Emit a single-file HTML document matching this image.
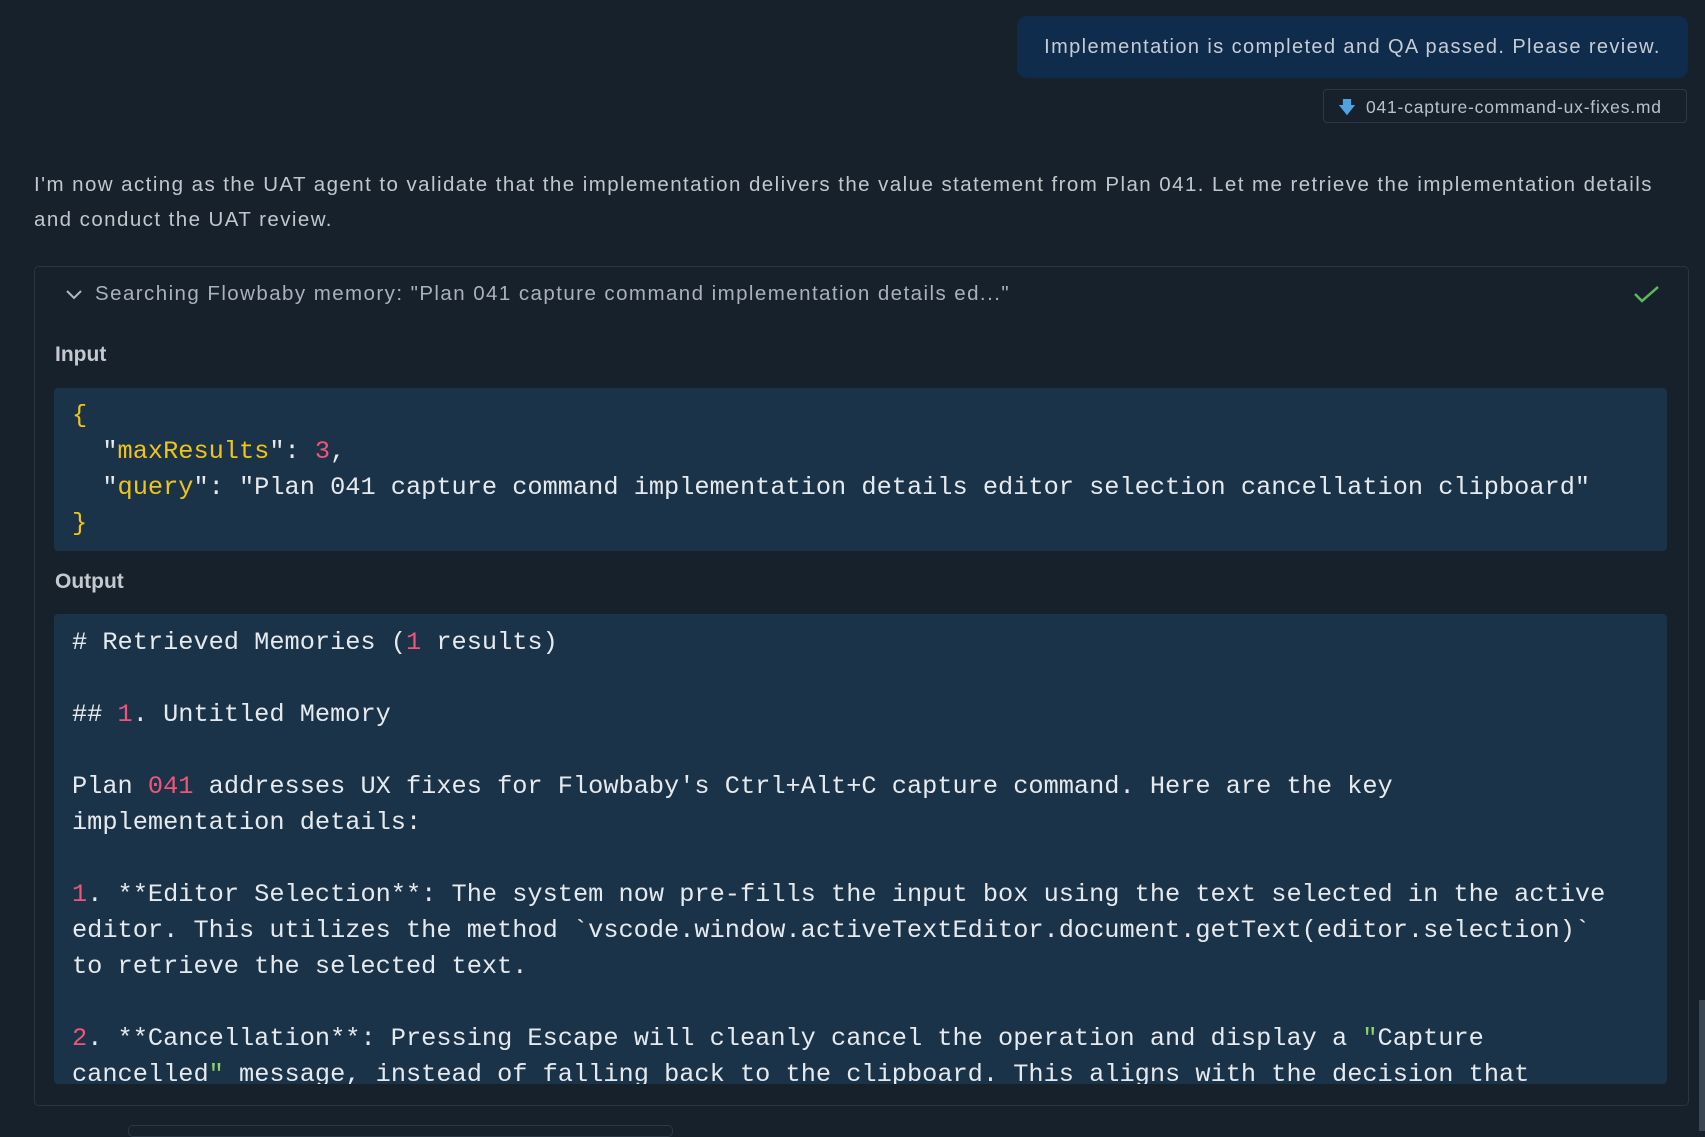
<!DOCTYPE html>
<html><head><meta charset="utf-8"><style>
body{margin:0;width:1705px;height:1131px;background:#17212b;overflow:hidden;position:relative;font-family:"Liberation Sans",sans-serif;color:#c3c9cf}
.abs{position:absolute}
.ub{letter-spacing:0.07em}
.bubble{left:1017px;top:16px;width:671px;height:62px;background:#0f2c4d;border-radius:10px;color:#c6ccd3;font-size:20px;line-height:62px;text-align:center;white-space:nowrap}
.chip{left:1323px;top:89px;width:364px;height:34px;border:1px solid #2c3944;border-radius:4px;font-size:17.5px;line-height:34px;color:#b8c0c8;box-sizing:border-box;white-space:nowrap}
.para{left:34px;top:167px;width:1660px;font-size:20.5px;line-height:35px;color:#c0c6cc;white-space:nowrap}
.box{left:34px;top:266px;width:1655px;height:840px;border:1px solid #2a3540;border-radius:5px;box-sizing:border-box}
.hdr{left:95px;top:282px;font-size:20.5px;color:#a9b1b9;white-space:nowrap}
.lbl{font-size:21px;color:#c3c9cf;font-weight:bold;left:55px}
.code{left:54px;width:1613px;background:#1a3349;border-radius:4px;font-family:"Liberation Mono",monospace;font-size:25.3px;line-height:36px;white-space:pre;color:#e6eaee;box-sizing:border-box;padding-left:18px;overflow:hidden}
.y{color:#f0c419}.n{color:#f0547a}.g{color:#8fd16a}
</style></head><body>
<div class="abs bubble ub">Implementation is completed and QA passed. Please review.</div>
<div class="abs chip ub" style="letter-spacing:0.045em"><span style="color:#4fa3e0;margin:0 10px 0 14px;letter-spacing:0">&#129095;</span>041-capture-command-ux-fixes.md</div>
<div class="abs para ub">I'm now acting as the UAT agent to validate that the implementation delivers the value statement from Plan 041. Let me retrieve the implementation details<br>and conduct the UAT review.</div>
<div class="abs box"></div>
<svg class="abs" style="left:65px;top:287px" width="20" height="16"><path d="M2 4 L9 11 L16 4" fill="none" stroke="#b0b8c0" stroke-width="2"/></svg>
<div class="abs hdr ub">Searching Flowbaby memory: "Plan 041 capture command implementation details ed..."</div>
<svg class="abs" style="left:1633px;top:284px" width="28" height="22"><path d="M2 10 L9 17 L25 3" fill="none" stroke="#5cb85c" stroke-width="2.5"/></svg>
<div class="abs lbl" style="top:343px">Input</div>
<div class="abs code" style="top:388px;height:163px;padding-top:10px"><span class="y">{</span>
  "<span class="y">maxResults</span>": <span class="n">3</span>,
  "<span class="y">query</span>": "Plan 041 capture command implementation details editor selection cancellation clipboard"
<span class="y">}</span></div>
<div class="abs lbl" style="top:570px">Output</div>
<div class="abs code" style="top:614px;height:470px;padding-top:11px"># Retrieved Memories (<span class="n">1</span> results)

## <span class="n">1</span>. Untitled Memory

Plan <span class="n">041</span> addresses UX fixes for Flowbaby's Ctrl+Alt+C capture command. Here are the key
implementation details:

<span class="n">1</span>. **Editor Selection**: The system now pre-fills the input box using the text selected in the active
editor. This utilizes the method `vscode.window.activeTextEditor.document.getText(editor.selection)`
to retrieve the selected text.

<span class="n">2</span>. **Cancellation**: Pressing Escape will cleanly cancel the operation and display a <span class="g">"</span>Capture
cancelled<span class="g">"</span> message, instead of falling back to the clipboard. This aligns with the decision that</div>
<div class="abs" style="left:1699px;top:1000px;width:6px;height:131px;background:#3a4753"></div>
<div class="abs" style="left:128px;top:1125px;width:543px;height:10px;border:1px solid #2c3944;border-radius:5px"></div>
</body></html>
